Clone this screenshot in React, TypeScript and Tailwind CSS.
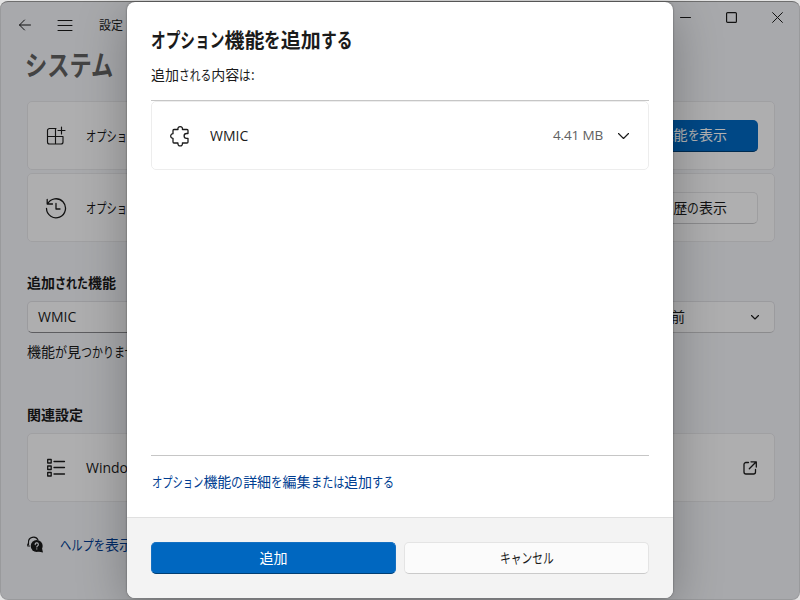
import type { ReactNode } from "react"

// Advance widths (in em) of the proportional UI kana
const kanaWidths: Record<string, number> = {
  オ: 0.76, プ: 0.77, シ: 0.77, ョ: 0.62, ン: 0.75, ス: 0.8, テ: 0.79, ム: 0.81,
  ヘ: 0.8, ル: 0.82, キ: 0.8, ャ: 0.66, セ: 0.8, の: 0.84, を: 0.82, さ: 0.76,
  れ: 0.79, る: 0.76, は: 0.83, す: 0.82, ま: 0.76, た: 0.8, が: 0.86, つ: 0.84,
  か: 0.82, り: 0.66, せ: 0.82,
}

function Jp({ text }: { text: string }) {
  const runs = text.match(/[\u3040-\u30ff]+|[^\u3040-\u30ff]+/g) ?? []
  return (
    <span className="flex whitespace-nowrap">
      {runs.map((run, index) => {
        if (!/[\u3040-\u30ff]/.test(run)) return <span key={index}>{run}</span>
        const width = [...run].reduce((sum, char) => sum + (kanaWidths[char] ?? 0.8), 0)
        return (
          <span key={index} className="shrink-0" style={{ width: `${width}em` }}>
            <span className="inline-block origin-left" style={{ transform: `scaleX(${width / run.length})` }}>
              {run}
            </span>
          </span>
        )
      })}
    </span>
  )
}

function Icon({ size, className, children }: { size: number; className?: string; children: ReactNode }) {
  return (
    <svg
      width={size}
      height={size}
      viewBox={`0 0 ${size} ${size}`}
      className={className}
      fill="none"
      stroke="currentColor"
      strokeWidth="1.15"
      strokeLinecap="round"
      strokeLinejoin="round"
    >
      {children}
    </svg>
  )
}

const AppsAddIcon = () => (
  <Icon size={20}>
    <path d="M10 2.5H3.5a2 2 0 0 0-2 2V16a2 2 0 0 0 2 2H15a2 2 0 0 0 2-2V10.500H1.5M9.5 2.500V18M12 4.500H19M15.5 1V8" />
  </Icon>
)

const HistoryIcon = () => (
  <Icon size={22} className="-ml-px mr-px">
    <path d="M2.2 2.500V7H7.500M2.5 7A9.500 9.500 0 1 1 1.500 11.500M11 6.5V12H15" strokeWidth="1.3" />
  </Icon>
)

const ListIcon = () => (
  <Icon size={20}>
    <path d="M1.7 1.500h3.500v3.500h-3.500zM1.700 8h3.500v3.500h-3.500zM1.700 14.500h3.500v3.500h-3.500zM8 3.500H18.5M8 9.500H18.5M8 16H18.5" strokeWidth="1.3" />
  </Icon>
)

const ExternalIcon = () => (
  <Icon size={16}>
    <path d="M6.5 2.5H4a2 2 0 0 0-2 2V12a2 2 0 0 0 2 2h7.500a2 2 0 0 0 2-2V9.500M9 1.800H14.300V7M14 2L7.300 8.700" strokeWidth="1.3" />
  </Icon>
)

const PuzzleIcon = () => (
  <Icon size={22} className="-ml-px mr-px">
    <path d="M4 5.500a1 1 0 0 1 1-1H9a2.300 2.300 0 1 1 4.400 0H18a1 1 0 0 1 1 1V8.500H17.500a2.300 2.300 0 0 0 0 4.800H19V17a1 1 0 0 1-1 1H13.400a2.300 2.300 0 1 1-4.400 0H5a1 1 0 0 1-1-1V13.300a2.300 2.300 0 1 1 0-4.600Z" strokeWidth="1.3" />
  </Icon>
)

const HelpIcon = () => (
  <Icon size={18}>
    <path d="M1.500 8.500V6.500a5 5 0 0 1 9.500-2.500M.800 8v2h1.700" />
    <circle cx="9.700" cy="10" r="6" fill="currentColor" stroke="none" />
    <path d="M11 15.500l5 1-1.200-5Z" fill="currentColor" stroke="none" />
    <path d="M8.200 8.700a1.600 1.600 0 1 1 2.300 1.200c-.5.300-.7.500-.7 1M9.800 12.800v.1" stroke="#f0f1f6" />
  </Icon>
)

const ChevronIcon = ({ size }: { size: number }) => (
  <Icon size={size}>
    <path d={size === 12 ? "M2.500 4.500L6 8L9.500 4.500" : "M1.500 4.500L6.500 9.500L11.500 4.500"} />
  </Icon>
)

const card = "flex h-[69px] shrink-0 items-center rounded-[5px] border border-[#e5e5e9] bg-[#fafafb] pl-[18px] pr-4"

function SettingsWindow() {
  return (
    <div className="flex h-[599px] flex-col overflow-hidden rounded-lg border border-t-0 border-[#dcdde0] bg-[#f1f2f7] pl-[26px] pr-6 text-[#1b1b1b]">
      <header className="-mr-4 flex h-12 shrink-0 items-start justify-between">
        <div className="-ml-[9px] flex h-12 items-center">
          <Icon size={14} className="mr-[25px]">
            <path d="M1.500 7H12.500M6.500 2L1.500 7L6.500 12" strokeWidth="1" />
          </Icon>
          <Icon size={16} className="mr-[26px]">
            <path d="M1 3.500H15M1 8.500H15M1 13.500H15" strokeWidth="1" />
          </Icon>
          <span className="pt-0.5 text-xs">
            <Jp text="設定" />
          </span>
        </div>
        <div className="mr-[8px] flex h-8 items-center gap-[35px]">
          <Icon size={11}>
            <path d="M.5 5.500H10.500" strokeWidth="1" />
          </Icon>
          <Icon size={11}>
            <rect x=".6" y=".6" width="9.800" height="9.800" rx="1" />
          </Icon>
          <Icon size={11}>
            <path d="M.6.6L10.400 10.400M10.400.6L.6 10.400" strokeWidth="1" />
          </Icon>
        </div>
      </header>

      <h1 className="-ml-[2px] -mt-[2px] h-[54px] shrink-0 text-[28px] font-bold leading-[36px] text-[#616161]">
        <Jp text="システム" />
      </h1>

      <div className="flex flex-col gap-[3px]">
        <div className={card}>
          <AppsAddIcon />
          <span className="ml-5 w-24 overflow-hidden">
            <Jp text="オプション機能" />
          </span>
          <button className="ml-auto flex h-8 w-[120px] items-center justify-end rounded-[5px] border-b border-[#003e73] bg-[#0067c0] pb-px pr-[31px] text-white">
            <Jp text="機能を表示" />
          </button>
        </div>
        <div className={card}>
          <HistoryIcon />
          <span className="ml-[18px] w-24 overflow-hidden">
            <Jp text="オプション機能" />
          </span>
          <button className="ml-auto flex h-8 w-[120px] items-center justify-end rounded-[5px] border border-[#e2e2e5] border-b-[#c8c8cb] bg-[#fbfbfc] pb-px pr-[30px]">
            <Jp text="履歴の表示" />
          </button>
        </div>
      </div>

      <h2 className="mt-[31px] font-bold leading-5">
        <Jp text="追加された機能" />
      </h2>
      <div className="mt-2 flex justify-between">
        <div className="flex h-8 w-60 items-center rounded-[5px] border border-[#dedee3] border-b-[#86868a] bg-[#fafafb] pb-0.5 pl-[10px]">WMIC</div>
        <div className="flex h-8 w-44 items-center justify-between rounded-[5px] border border-[#dedee3] border-b-[#c8c8cb] bg-[#fafafb] pb-px pl-[57px] pr-[13px]">
          <Jp text="名前" />
          <ChevronIcon size={12} />
        </div>
      </div>
      <p className="mt-[9px] leading-5">
        <Jp text="機能が見つかりません" />
      </p>

      <h2 className="mt-[43px] font-bold leading-5">
        <Jp text="関連設定" />
      </h2>
      <div className={`${card} mt-2`}>
        <ListIcon />
        <span className="ml-5">Windows</span>
        <span className="ml-auto">
          <ExternalIcon />
        </span>
      </div>
      <div className="mt-[33px] flex items-center leading-5">
        <HelpIcon />
        <a className="ml-[15px] text-[#003e92]">
          <Jp text="ヘルプを表示" />
        </a>
      </div>
    </div>
  )
}

function AddFeatureDialog() {
  return (
    <div className="absolute left-[127px] top-[2px] flex h-[596px] w-[546px] flex-col overflow-hidden rounded-lg bg-white text-[#1b1b1b] shadow-[0_10px_50px_rgba(0,0,0,0.28),0_0_2px_rgba(0,0,0,0.5)]">
      <div className="flex flex-1 flex-col px-6 pt-6">
        <h1 className="text-[20px] font-bold leading-[30px]">
          <Jp text="オプション機能を追加する" />
        </h1>
        <p className="mt-[9px] leading-5">
          <Jp text="追加される内容は:" />
        </p>
        <div className="mt-[15px] h-[356px] border-y border-[#c6c6c6]">
          <div className="flex h-[69px] items-center rounded-[5px] border border-[#ededed] pl-[18px] pr-[17px]">
            <PuzzleIcon />
            <span className="ml-[18px] pb-px">WMIC</span>
            <span className="ml-auto mr-[14px] pb-px text-[13.5px] tracking-[-0.15px] text-[#616161]">4.41 MB</span>
            <ChevronIcon size={14} />
          </div>
        </div>
        <a className="ml-px mt-4 leading-5 text-[#003e92]">
          <Jp text="オプション機能の詳細を編集または追加する" />
        </a>
      </div>
      <div className="flex h-[81px] gap-2 border-t border-[#e0e0e0] bg-[#f3f3f3] px-6 pt-6">
        <button className="flex h-8 flex-1 items-center justify-center rounded-[5px] border border-[#1470c2] border-b-[#003e73] bg-[#0067c0] pb-0.5 text-white">
          <Jp text="追加" />
        </button>
        <button className="flex h-8 flex-1 items-center justify-center rounded-[5px] border border-[#e4e4e4] border-b-[#cacaca] bg-[#fbfbfb] pb-0.5">
          <Jp text="キャンセル" />
        </button>
      </div>
    </div>
  )
}

export default function App() {
  return (
    <div className="relative h-[600px] w-[800px] overflow-hidden bg-[#e4e4e4] pt-px font-['Open_Sans','Noto_Sans_CJK_JP',sans-serif] text-[14px]">
      <SettingsWindow />
      <div className="absolute inset-x-0 bottom-0 top-px rounded-lg border-t border-[#6e6e6e] bg-black/30" />
      <AddFeatureDialog />
    </div>
  )
}
